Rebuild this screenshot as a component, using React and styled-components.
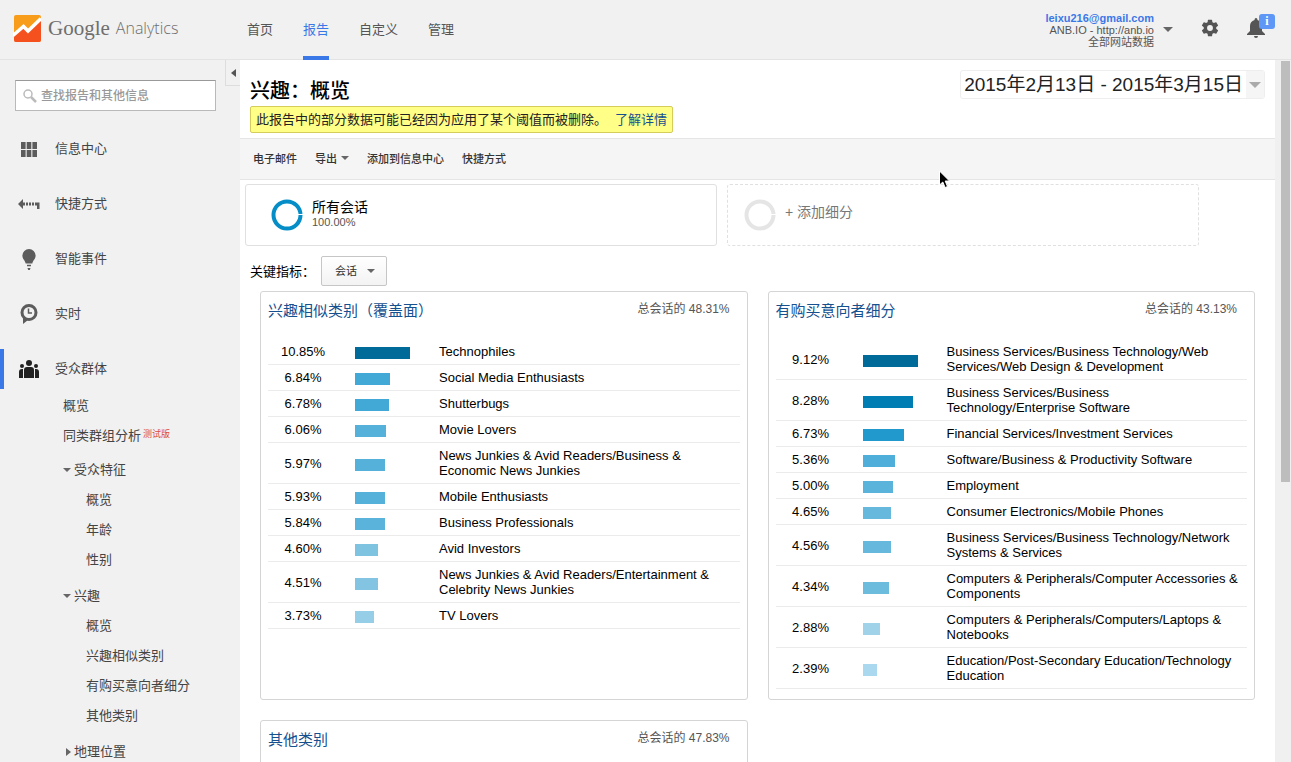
import styled, { createGlobalStyle } from "styled-components";

const GlobalStyle = createGlobalStyle`
  * {
    box-sizing: border-box;
  }
  body {
    margin: 0;
    overflow: hidden;
    font-family: "Liberation Sans", "Noto Sans CJK SC", sans-serif;
    font-size: 13px;
    line-height: 15px;
    color: #000;
    background: #fff;
  }
  a {
    color: inherit;
    text-decoration: none;
  }
  button, input, select {
    font-family: inherit;
  }
`;

const Page = styled.div`
  display: flex;
  flex-direction: column;
  height: 100vh;
`;

/* header */

const Header = styled.header`
  display: flex;
  flex-shrink: 0;
  align-items: stretch;
  height: 60px;
  padding: 0 26px 0 13px;
  background: #f1f1f1;
  border-bottom: 1px solid #e3e3e3;
`;

const Brand = styled.a`
  display: flex;
  align-items: center;
  width: 234px;
  padding-bottom: 4px;
  color: #6e6e6e;
`;

const GoogleWord = styled.span`
  margin-left: 7px;
  font-family: "Liberation Serif", serif;
  font-size: 21px;
  line-height: 28px;
`;

const ProductWord = styled.span`
  margin-left: 6px;
  font-family: "Open Sans", sans-serif;
  font-size: 16px;
  font-weight: 300;
  line-height: 28px;
`;

const Nav = styled.nav`
  display: flex;
  flex: 1;
  gap: 30px;
`;

const NavLink = styled.a`
  height: 60px;
  line-height: 59px;
  color: ${(p) => (p.$active ? "#3b78e7" : "#555")};
  border-bottom: 4px solid ${(p) => (p.$active ? "#3b78e7" : "transparent")};
`;

const Account = styled.button`
  display: flex;
  align-items: center;
  gap: 9px;
  padding: 0;
  border: none;
  background: none;
  color: #555;
  font-size: 11px;
  line-height: 12px;
  text-align: right;
  cursor: pointer;
`;

const AccountText = styled.span`
  display: flex;
  flex-direction: column;
`;

const Email = styled.strong`
  color: #3b78e7;
`;

const Caret = styled.span`
  width: 0;
  height: 0;
  border: ${(p) => p.$size || 4}px solid transparent;
  border-top-color: ${(p) => p.$color || "#666"};
  border-bottom: 0;
`;

const IconButton = styled.button`
  position: relative;
  display: flex;
  align-items: center;
  margin-left: 27px;
  padding: 0 0 4px;
  border: none;
  background: none;
  color: #555;
  cursor: pointer;
`;

const Badge = styled.span`
  position: absolute;
  top: 14px;
  left: 12px;
  width: 16px;
  height: 15px;
  border-radius: 3px;
  background: #5e97f6;
  color: #fff;
  font-family: "Liberation Serif", serif;
  font-size: 12px;
  font-weight: bold;
  line-height: 15px;
  text-align: center;
`;

/* sidebar */

const Body = styled.div`
  display: flex;
  flex: 1;
  min-height: 0;
`;

const Sidebar = styled.aside`
  position: relative;
  flex: 0 0 240px;
  overflow: hidden;
  padding-top: 20px;
  background: #f1f1f1;
  color: #444;
`;

const Collapse = styled.button`
  position: absolute;
  top: 0;
  right: 0;
  width: 15px;
  height: 26px;
  padding: 0;
  display: flex;
  align-items: center;
  justify-content: center;
  border: 1px solid #ddd;
  border-width: 0 0 1px 1px;
  background: #f1f1f1;
  color: #555;
`;

const Search = styled.label`
  display: flex;
  align-items: center;
  gap: 4px;
  height: 31px;
  margin: 0 24px 18px 15px;
  padding-left: 7px;
  border: 1px solid #b9b9b9;
  border-top-color: #999;
  background: #fff;
  color: #bbb;
`;

const SearchInput = styled.input`
  flex: 1;
  min-width: 0;
  padding: 0;
  border: none;
  outline: none;
  font-size: 12px;
  font-weight: 500;
  &::placeholder {
    color: #999;
    opacity: 1;
  }
`;

const MainLink = styled.a`
  display: flex;
  align-items: center;
  height: 40px;
  margin-bottom: ${(p) => (p.$active ? 2 : 15)}px;
  border-left: 4px solid ${(p) => (p.$active ? "#3b78e7" : "transparent")};
  color: #444;
  line-height: 20px;
`;

const LinkIcon = styled.span`
  display: flex;
  justify-content: center;
  width: 22px;
  margin: 0 15px 0 14px;
  color: ${(p) => (p.$active ? "#222" : "#5c5c5c")};
`;

const SubList = styled.ul`
  margin: 0 0 ${(p) => p.$gap || 6}px;
  padding: 0;
  list-style: none;
`;

const SubItem = styled.li`
  height: 30px;
  padding-left: ${(p) => (p.$deep ? 86 : 63)}px;
  line-height: 30px;
`;

const GroupToggle = styled.button`
  display: flex;
  align-items: center;
  gap: 3px;
  height: 30px;
  padding: 0 0 0 63px;
  border: none;
  background: none;
  color: #444;
  font-size: 13px;
  line-height: 30px;
`;

const ToggleMark = styled.span`
  width: 0;
  height: 0;
  border: 4px solid transparent;
  ${(p) =>
    p.$open
      ? "border-top-color: #666; border-bottom: 0;"
      : "border-left: 5px solid #666; border-right: 0; margin: 0 0 0 3px;"}
`;

const Beta = styled.sup`
  margin-left: 2px;
  color: #dd4b39;
  font-size: 9px;
  line-height: 9px;
  vertical-align: 3px;
`;

/* report */

const Main = styled.main`
  flex: 1;
  min-width: 0;
  overflow: hidden;
`;

const TitleBar = styled.div`
  display: flex;
  justify-content: space-between;
  align-items: flex-start;
  padding: 10px 10px 5px;
`;

const Title = styled.h1`
  margin: 9px 0 2px;
  font-size: 20px;
  font-weight: 500;
  line-height: 25px;
`;

const Notice = styled.p`
  margin: 0;
  padding: 0 5px;
  border: 1px solid #d6cc5a;
  border-radius: 2px;
  background: #ffff88;
  line-height: 25px;
  color: #222;
`;

const NoticeLink = styled.a`
  margin-left: 8px;
  color: #15508f;
`;

const DateRange = styled.button`
  display: flex;
  align-items: center;
  padding: 0;
  border: 1px solid #eee;
  border-radius: 3px;
  background: #fff;
  color: #222;
  font-size: 19px;
  line-height: 27px;
`;

const DateText = styled.span`
  padding: 0 3px;
`;

const DateCaret = styled.span`
  display: flex;
  align-items: center;
  align-self: stretch;
  padding: 0 3px;
  background: #f5f5f5;
`;

const Toolbar = styled.div`
  display: flex;
  gap: 18px;
  height: 42px;
  padding: 0 13px;
  border: 1px solid #e5e5e5;
  border-width: 1px 0;
  background: #f5f5f5;
`;

const ToolButton = styled.button`
  display: flex;
  align-items: center;
  gap: 4px;
  padding: 0 0 2px;
  border: none;
  background: none;
  color: #333;
  font-size: 11px;
  font-weight: 500;
`;

const Segments = styled.div`
  display: grid;
  grid-template-columns: 1fr 1fr;
  gap: 10px;
  padding: 4px 76px 10px 5px;
`;

const Segment = styled.button`
  display: flex;
  align-items: flex-start;
  gap: 9px;
  height: 62px;
  padding: 14px ${(p) => (p.$empty ? 16 : 25)}px;
  border: 1px ${(p) => (p.$empty ? "dashed" : "solid")} #e0e0e0;
  border-radius: 3px;
  background: #fff;
  text-align: left;
`;

const SegmentName = styled.span`
  display: block;
  font-size: 14px;
  line-height: 16px;
  color: #000;
`;

const SegmentShare = styled.span`
  display: block;
  font-size: 11px;
  line-height: 15px;
  color: #555;
`;

const SegmentAdd = styled.span`
  font-size: 14px;
  line-height: 26px;
  color: #777;
`;

const MetricRow = styled.div`
  display: flex;
  align-items: center;
  gap: 6px;
  padding: 0 10px 5px;
`;

const SelectBox = styled.span`
  display: grid;
  align-items: center;
  & > * {
    grid-area: 1 / 1;
  }
  & > span {
    justify-self: end;
    margin-right: 12px;
    pointer-events: none;
  }
`;

const Select = styled.select`
  appearance: none;
  width: 66px;
  height: 30px;
  padding: 0 13px;
  border: 1px solid #c6c6c6;
  border-radius: 2px;
  background: linear-gradient(#fff, #f3f3f3);
  color: #333;
  font-size: 11px;
`;

const Panels = styled.div`
  display: grid;
  grid-template-columns: 1fr 1fr;
  gap: 20px;
  padding: 0 20px;
`;

const Panel = styled.section`
  min-height: 60px;
  padding: 7px 7px 10px;
  border: 1px solid #d5d5d5;
  border-radius: 3px;
`;

const PanelHead = styled.div`
  display: flex;
  justify-content: space-between;
  align-items: flex-start;
  padding-right: 10px;
  margin-bottom: 16px;
`;

const PanelTitle = styled.h2`
  margin: 0;
  color: #15508f;
  font-size: 15px;
  font-weight: 400;
  line-height: 24px;
`;

const PanelTotal = styled.span`
  color: #555;
  font-size: 12px;
  line-height: 20px;
`;

const Table = styled.table`
  width: 100%;
  border-collapse: separate;
  border-spacing: 0;
  table-layout: fixed;
`;

const Cell = styled.td`
  width: ${(p) => (p.$width ? p.$width + "px" : "auto")};
  padding: 5px 0;
  border-bottom: 1px solid #ebebeb;
  text-align: center;
  font-weight: 400;
  vertical-align: middle;
`;

const BarCell = styled(Cell)`
  padding: 3px 0 0 17px;
`;

const NameCell = styled(Cell)`
  padding-right: 8px;
  text-align: left;
`;

const Bar = styled.div`
  height: 12px;
`;

const ScrollTrack = styled.div`
  flex: 0 0 16px;
  padding: 1px 1px 0 6px;
  background: #f0f0f0;
`;

const ScrollThumb = styled.div`
  height: 60%;
  background: #bdbdbd;
`;

const Pointer = styled.svg`
  position: fixed;
  left: 938px;
  top: 170px;
`;

const BAR_WIDTH = 55;

const affinity = [
  [10.85, "#006b99", "Technophiles"],
  [6.84, "#42a8d6", "Social Media Enthusiasts"],
  [6.78, "#42a8d6", "Shutterbugs"],
  [6.06, "#56b1da", "Movie Lovers"],
  [5.97, "#56b1da", "News Junkies & Avid Readers/Business & Economic News Junkies"],
  [5.93, "#56b1da", "Mobile Enthusiasts"],
  [5.84, "#5ab3da", "Business Professionals"],
  [4.6, "#7ec3e0", "Avid Investors"],
  [4.51, "#82c4e2", "News Junkies & Avid Readers/Entertainment & Celebrity News Junkies"],
  [3.73, "#96cee8", "TV Lovers"],
];

const inMarket = [
  [9.12, "#006b99", "Business Services/Business Technology/Web Services/Web Design & Development"],
  [8.28, "#007db3", "Business Services/Business Technology/Enterprise Software"],
  [6.73, "#2299cc", "Financial Services/Investment Services"],
  [5.36, "#50aeda", "Software/Business & Productivity Software"],
  [5.0, "#5ab3da", "Employment"],
  [4.65, "#66b8dc", "Consumer Electronics/Mobile Phones"],
  [4.56, "#66b8dc", "Business Services/Business Technology/Network Systems & Services"],
  [4.34, "#6cbcde", "Computers & Peripherals/Computer Accessories & Components"],
  [2.88, "#a0d2ea", "Computers & Peripherals/Computers/Laptops & Notebooks"],
  [2.39, "#aad8ef", "Education/Post-Secondary Education/Technology Education"],
];

const GridIcon = () => (
  <svg width="16" height="15" viewBox="0 0 16 15" fill="currentColor">
    <path d="M0 0h4.600v7H0zM5.700 0h4.600v7H5.700zM11.400 0H16v7h-4.600zM0 8h4.600v7H0zM5.700 8h4.600v7H5.700zM11.400 8H16v7h-4.600z" />
  </svg>
);

const ShortcutIcon = () => (
  <svg width="22" height="10" viewBox="0 0 22 10" fill="currentColor">
    <path d="M0 5l5-5v3.500h2v3H5V10zM8 3.500h2v3H8zM11 3.500h2v3h-2zM14 3.500h2v3h-2zM17 3.500h4.500V10H19V6.500h-2z" />
  </svg>
);

const BulbIcon = () => (
  <svg width="14" height="21" viewBox="0 0 14 21" fill="currentColor">
    <path d="M7 0a6.600 6.600 0 0 1 6.600 6.600c0 3.400-2.400 4.600-3.300 8H3.700c-.9-3.400-3.300-4.600-3.300-8A6.600 6.600 0 0 1 7 0zM5 15.700h4v1.500H5zM5.500 19h3l-.7 2H6.200z" />
  </svg>
);

const ClockIcon = () => (
  <svg width="18" height="20" viewBox="0 0 18 20">
    <path d="M3 13v7l5-4z" fill="currentColor" />
    <circle cx="9" cy="8.500" r="7" fill="#f1f1f1" stroke="currentColor" strokeWidth="3" />
    <path d="M8.500 4.500v4.500h3.500" fill="none" stroke="currentColor" strokeWidth="1.500" />
  </svg>
);

const PeopleIcon = () => (
  <svg width="20" height="18" viewBox="0 0 20 18" fill="currentColor">
    <circle cx="10" cy="3" r="3" />
    <circle cx="3" cy="6" r="2" />
    <circle cx="17" cy="6" r="2" />
    <path d="M5 18v-8q0-3 3-3h4q3 0 3 3v8zM0 18v-6q0-3 3-3h1v9zM20 18v-6q0-3-3-3h-1v9z" />
  </svg>
);

const mainLinks = [
  ["信息中心", GridIcon],
  ["快捷方式", ShortcutIcon],
  ["智能事件", BulbIcon],
  ["实时", ClockIcon],
  ["受众群体", PeopleIcon],
];

const groups = [
  ["受众特征", ["概览", "年龄", "性别"]],
  ["兴趣", ["概览", "兴趣相似类别", "有购买意向者细分", "其他类别"]],
  ["地理位置", []],
];

const Logo = () => (
  <svg width="28" height="28" viewBox="0 0 28 28">
    <rect x="1" y="1" width="27" height="27" rx="2" fill="#f89c1c" />
    <path d="M1 22L11 13l5 5L28 6v20q0 2-2 2H3q-2 0-2-2z" fill="#f4511e" />
    <path d="M0 21.500L10.500 12.500l4.500 4.500L28 4.500" fill="none" stroke="#fff" strokeWidth="3.500" />
  </svg>
);

const GearIcon = () => (
  <svg width="20" height="20" viewBox="0 0 24 24" fill="currentColor">
    <path d="M19.430 12.980c.04-.32.07-.64.07-.98s-.03-.66-.07-.98l2.110-1.650c.19-.15.24-.42.12-.64l-2-3.460c-.12-.22-.39-.3-.61-.22l-2.490 1c-.52-.4-1.080-.73-1.690-.98l-.38-2.650A.49.49 0 0 0 14 2h-4c-.25 0-.46.18-.49.42l-.38 2.650c-.61.25-1.170.59-1.690.98l-2.490-1c-.23-.09-.49 0-.61.22l-2 3.460c-.13.22-.07.49.12.64l2.110 1.650c-.04.32-.07.65-.07.98s.03.66.07.98l-2.110 1.650c-.19.15-.24.42-.12.64l2 3.460c.12.22.39.3.61.22l2.490-1c.52.4 1.080.73 1.690.98l.38 2.650c.03.24.24.42.49.42h4c.25 0 .46-.18.49-.42l.38-2.650c.61-.25 1.170-.59 1.690-.98l2.490 1c.23.09.49 0 .61-.22l2-3.460c.12-.22.07-.49-.12-.64zM12 15.500a3.500 3.500 0 1 1 0-7 3.500 3.500 0 0 1 0 7z" />
  </svg>
);

const BellIcon = () => (
  <svg width="18" height="20" viewBox="0 0 18 20" fill="currentColor">
    <path d="M9 0q1.500 0 1.500 2Q15 3.500 15 8v5l3 3v1H0v-1l3-3V8q0-4.500 4.500-6Q7.500 0 9 0zM7 18h4q0 2-2 2t-2-2z" />
  </svg>
);

const Ring = ({ color }) => (
  <svg width="32" height="32" viewBox="0 0 32 32">
    <circle cx="16" cy="16" r="13.500" fill="none" stroke={color} strokeWidth="4" />
    <path d="M27 15.500h5" stroke="#fff" />
  </svg>
);

const ReportPanel = ({ title, total, rows = [] }) => (
  <Panel>
    <PanelHead>
      <PanelTitle>
        <a href="#report">{title}</a>
      </PanelTitle>
      <PanelTotal>总会话的 {total}%</PanelTotal>
    </PanelHead>
    {rows.length > 0 && (
      <Table aria-label={title}>
        <tbody>
          {rows.map(([value, color, name]) => (
            <tr key={name}>
              <Cell $width={70}>{value.toFixed(2)}%</Cell>
              <BarCell $width={101}>
                <Bar
                  style={{
                    width: Math.round((value / rows[0][0]) * BAR_WIDTH),
                    background: color,
                  }}
                />
              </BarCell>
              <NameCell as="th" scope="row">
                {name}
              </NameCell>
            </tr>
          ))}
        </tbody>
      </Table>
    )}
  </Panel>
);

const App = () => {
  return (
    <Page>
      <GlobalStyle />
      <Header>
        <Brand href="#home">
          <Logo />
          <GoogleWord>Google</GoogleWord>
          <ProductWord>Analytics</ProductWord>
        </Brand>
        <Nav>
          <NavLink href="#home">首页</NavLink>
          <NavLink href="#reports" $active>
            报告
          </NavLink>
          <NavLink href="#custom">自定义</NavLink>
          <NavLink href="#admin">管理</NavLink>
        </Nav>
        <Account>
          <AccountText>
            <Email>leixu216@gmail.com</Email>
            <span>ANB.IO - http://anb.io</span>
            <span>全部网站数据</span>
          </AccountText>
          <Caret $size={5} />
        </Account>
        <IconButton aria-label="设置">
          <GearIcon />
        </IconButton>
        <IconButton aria-label="通知">
          <BellIcon />
          <Badge>i</Badge>
        </IconButton>
      </Header>

      <Body>
        <Sidebar>
          <Collapse aria-label="收起">
            <svg width="5" height="8" viewBox="0 0 5 8">
              <path d="M5 0v8L0 4z" fill="currentColor" />
            </svg>
          </Collapse>
          <Search>
            <svg width="14" height="14" viewBox="0 0 14 14" fill="none" stroke="currentColor">
              <circle cx="5" cy="5" r="4" strokeWidth="1.500" />
              <path d="M8 8l5 5" strokeWidth="2.500" />
            </svg>
            <SearchInput aria-label="查找报告和其他信息" placeholder="查找报告和其他信息" />
          </Search>
          {mainLinks.map(([name, Icon]) => {
            const active = name === "受众群体";
            return (
              <MainLink href="#section" key={name} $active={active}>
                <LinkIcon $active={active}>
                  <Icon />
                </LinkIcon>
                {name}
              </MainLink>
            );
          })}
          <SubList $gap={4}>
            <SubItem>
              <a href="#overview">概览</a>
            </SubItem>
            <SubItem>
              <a href="#cohort">
                同类群组分析<Beta>测试版</Beta>
              </a>
            </SubItem>
          </SubList>
          {groups.map(([name, items]) => (
            <div key={name}>
              <GroupToggle aria-expanded={items.length > 0}>
                <ToggleMark $open={items.length > 0} />
                {name}
              </GroupToggle>
              <SubList>
                {items.map((item) => (
                  <SubItem key={item} $deep>
                    <a href="#item">{item}</a>
                  </SubItem>
                ))}
              </SubList>
            </div>
          ))}
        </Sidebar>

        <Main>
          <TitleBar>
            <div>
              <Title>兴趣：概览</Title>
              <Notice>
                此报告中的部分数据可能已经因为应用了某个阈值而被删除。
                <NoticeLink href="#learn">了解详情</NoticeLink>
              </Notice>
            </div>
            <DateRange>
              <DateText>2015年2月13日 - 2015年3月15日</DateText>
              <DateCaret>
                <Caret $size={6} $color="#aaa" />
              </DateCaret>
            </DateRange>
          </TitleBar>
          <Toolbar>
            <ToolButton>电子邮件</ToolButton>
            <ToolButton>
              导出 <Caret />
            </ToolButton>
            <ToolButton>添加到信息中心</ToolButton>
            <ToolButton>快捷方式</ToolButton>
          </Toolbar>
          <Segments>
            <Segment>
              <Ring color="#058dc7" />
              <span>
                <SegmentName>所有会话</SegmentName>
                <SegmentShare>100.00%</SegmentShare>
              </span>
            </Segment>
            <Segment $empty>
              <Ring color="#e5e5e5" />
              <SegmentAdd>+ 添加细分</SegmentAdd>
            </Segment>
          </Segments>
          <MetricRow>
            <label htmlFor="metric">关键指标：</label>
            <SelectBox>
              <Select id="metric">
                <option>会话</option>
              </Select>
              <Caret />
            </SelectBox>
          </MetricRow>
          <Panels>
            <ReportPanel title="兴趣相似类别（覆盖面）" total="48.31" rows={affinity} />
            <ReportPanel title="有购买意向者细分" total="43.13" rows={inMarket} />
            <ReportPanel title="其他类别" total="47.83" />
          </Panels>
        </Main>

        <ScrollTrack>
          <ScrollThumb />
        </ScrollTrack>
      </Body>

      <Pointer width="13" height="20" viewBox="0 0 13 20">
        <path
          d="M1.500 1v14l3.300-3 2.300 5.500 2.400-1L7.200 11h4.300z"
          fill="#000"
          stroke="#fff"
        />
      </Pointer>
    </Page>
  );
};

export default App;
